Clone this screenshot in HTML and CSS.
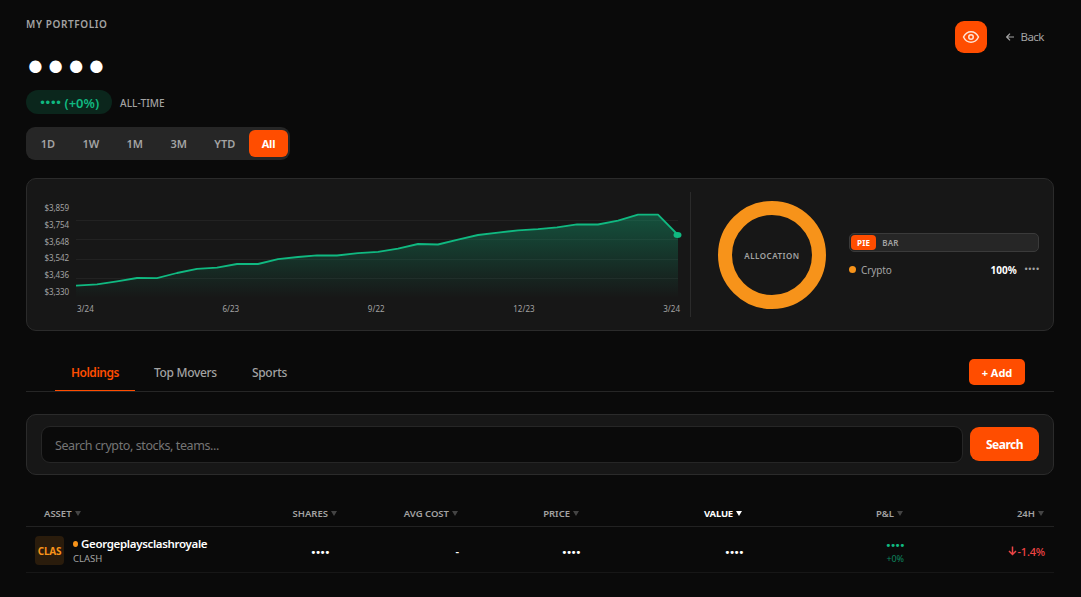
FILE: index.html
```
<!DOCTYPE html>
<html lang="en">
<head>
    <meta charset="UTF-8">
    <meta name="viewport" content="width=device-width, initial-scale=1.0">
    <title>My Portfolio</title>
    <link rel="stylesheet" href="styles.css">
</head>
<body>
    <header class="header">
        <div class="summary">
            <div class="title">MY PORTFOLIO</div>
            <div class="balance">••••</div>
            <div class="change-row">
                <span class="badge"><span class="badge-dots">••••</span><span>(+0%)</span></span>
                <span class="period">ALL-TIME</span>
            </div>
            <div class="ranges">
                <button>1D</button>
                <button>1W</button>
                <button>1M</button>
                <button>3M</button>
                <button>YTD</button>
                <button class="active">All</button>
            </div>
        </div>
        <div class="actions">
            <button class="eye-btn" aria-label="Show balances">
                <svg width="18" height="18" viewBox="0 0 24 24" fill="none" stroke="currentColor" stroke-width="2" stroke-linecap="round" stroke-linejoin="round">
                    <path d="M2 12s3.500-7 10-7 10 7 10 7-3.500 7-10 7-10-7-10-7z"/>
                    <circle cx="12" cy="12" r="3"/>
                </svg>
            </button>
            <a class="back" href="#">
                <svg width="8" height="8" viewBox="0 0 8 8" fill="none" stroke="currentColor" stroke-width="1.2"><path d="M8 4H0.800M4 0.600L0.700 4L4 7.400"/></svg>
                <span>Back</span>
            </a>
        </div>
    </header>

    <section class="card overview">
        <div class="chart">
            <div class="y-axis">
                <span>$3,859</span>
                <span>$3,754</span>
                <span>$3,648</span>
                <span>$3,542</span>
                <span>$3,436</span>
                <span>$3,330</span>
            </div>
            <div class="plot">
                <svg class="plot-svg" width="602" height="97" viewBox="0 0 602 97">
                    <defs>
                        <linearGradient id="fill" x1="0" y1="0" x2="0" y2="1">
                            <stop offset="0" stop-color="#10b981" stop-opacity="0.36"/>
                            <stop offset="1" stop-color="#10b981" stop-opacity="0"/>
                        </linearGradient>
                    </defs>
                    <path class="grid-line" d="M0 19.500H602M0 38.500H602M0 58.500H602M0 77.500H602"/>
                    <path fill="url(#fill)" d="M0 84.700L21 83.300L41 80.300L61 77L81 77.200L101 72L121 67.800L141 66.700L161 63L182 63L202 58.200L222 56L241 54.300L261 54.500L282 52.200L302 50.800L322 47.700L342 43L362 43.500L382 38.700L402 34L422 31.700L442 29.300L462 28.200L481 26.300L501 23.300L522 23.500L542 19.700L562 13.700L582 13.700L602 34V97H0Z"/>
                    <polyline class="line" points="0,84.700 21,83.300 41,80.300 61,77 81,77.200 101,72 121,67.800 141,66.700 161,63 182,63 202,58.200 222,56 241,54.300 261,54.500 282,52.200 302,50.800 322,47.700 342,43 362,43.500 382,38.700 402,34 422,31.700 442,29.300 462,28.200 481,26.300 501,23.300 522,23.500 542,19.700 562,13.700 582,13.700 602,34"/>
                    <ellipse cx="601.500" cy="34" rx="4" ry="3" fill="#10b981"/>
                </svg>
                <div class="x-axis">
                    <span>3/24</span>
                    <span>6/23</span>
                    <span>9/22</span>
                    <span>12/23</span>
                    <span>3/24</span>
                </div>
            </div>
        </div>
        <div class="allocation">
            <div class="donut"><span>ALLOCATION</span></div>
            <div class="legend">
                <div class="toggle">
                    <button class="active">PIE</button>
                    <button>BAR</button>
                </div>
                <div class="legend-row">
                    <i class="legend-dot"></i>
                    <span class="legend-name">Crypto</span>
                    <b>100%</b>
                    <span class="legend-value">••••</span>
                </div>
            </div>
        </div>
    </section>

    <nav class="tabs">
        <a class="tab active" href="#">Holdings</a>
        <a class="tab" href="#">Top Movers</a>
        <a class="tab" href="#">Sports</a>
        <button class="add-btn">+ Add</button>
    </nav>

    <form class="card search">
        <input type="text" placeholder="Search crypto, stocks, teams...">
        <button type="button">Search</button>
    </form>

    <table class="holdings">
        <colgroup>
            <col class="c-asset"><col class="c-shares"><col class="c-cost"><col class="c-price"><col class="c-value"><col class="c-pl"><col class="c-day">
        </colgroup>
        <thead>
            <tr>
                <th class="left">ASSET<i></i></th>
                <th>SHARES<i></i></th>
                <th>AVG COST<i></i></th>
                <th>PRICE<i></i></th>
                <th class="sorted">VALUE<i></i></th>
                <th>P&amp;L<i></i></th>
                <th>24H<i></i></th>
            </tr>
        </thead>
        <tbody>
            <tr>
                <td class="left">
                    <div class="asset">
                        <div class="avatar">CLAS</div>
                        <div class="asset-text">
                            <div class="asset-name"><i></i>Georgeplaysclashroyale</div>
                            <div class="asset-symbol">CLASH</div>
                        </div>
                    </div>
                </td>
                <td class="shares"><span class="dots">••••</span></td>
                <td>-</td>
                <td><span class="dots">••••</span></td>
                <td><span class="dots">••••</span></td>
                <td class="pl"><span class="dots">••••</span><small>+0%</small></td>
                <td class="day">
                    <svg width="9" height="10" viewBox="0 0 9 10" fill="none" stroke="currentColor" stroke-width="1.500"><path d="M4.500 0.500V8.500M1 5L4.500 8.500L8 5"/></svg><span>-1.4%</span>
                </td>
            </tr>
        </tbody>
    </table>
</body>
</html>
```
FILE: styles.css
```
* {
    margin: 0;
    padding: 0;
    box-sizing: border-box;
}

body {
    background: #0a0a0a;
    color: #fff;
    font-family: 'Noto Sans', 'Segoe UI', sans-serif;
    font-size: 11px;
    padding: 17px 27px 0 26px;
    height: 597px;
    overflow: hidden;
}

button {
    border: none;
    background: none;
    font-family: inherit;
    cursor: pointer;
    white-space: nowrap;
}

a {
    text-decoration: none;
}

.header {
    display: flex;
    justify-content: space-between;
}

.title {
    padding-bottom: 1px;
    font-size: 10px;
    font-weight: 600;
    letter-spacing: 0.6px;
    line-height: 14px;
    color: #a3a3a3;
}

.balance {
    height: 40px;
    margin: 16px 0 2px -3px;
    font-family: 'DejaVu Sans', sans-serif;
    font-size: 42px;
    line-height: 42px;
    letter-spacing: -4.400px;
}

.change-row {
    display: flex;
    align-items: center;
    gap: 8px;
}

.badge {
    display: flex;
    align-items: center;
    justify-content: center;
    gap: 4px;
    width: 86px;
    height: 24px;
    padding-top: 1px;
    border-radius: 12px;
    background: #0b261c;
    color: #10b981;
    font-size: 13px;
    font-weight: 600;
    line-height: 18px;
    white-space: nowrap;
}

.badge-dots {
    padding-top: 1px;
    font-family: 'DejaVu Sans', sans-serif;
    font-size: 12px;
    font-weight: 400;
    letter-spacing: -1.700px;
}

.period {
    color: #a3a3a3;
    font-size: 10px;
    font-weight: 500;
    padding-top: 2px;
    letter-spacing: 0.1px;
}

.ranges {
    display: flex;
    width: 264px;
    height: 33px;
    margin-top: 13px;
    padding: 3px 2px 3px 1px;
    border-radius: 9px;
    background: #262626;
}

.ranges button {
    flex: 1 1 auto;
    padding: 0 11px;
    border-radius: 6px;
    color: #a3a3a3;
    font-size: 11px;
    font-weight: 600;
}

.ranges .active {
    flex: none;
    width: 39px;
    background: #ff4d00;
    color: #fff;
    font-weight: 700;
    letter-spacing: -0.2px;
}

.actions {
    display: flex;
    align-items: center;
    gap: 19px;
    height: 32px;
    margin-top: 4px;
    padding-right: 10px;
}

.eye-btn {
    display: flex;
    align-items: center;
    justify-content: center;
    width: 32px;
    height: 32px;
    border-radius: 9px;
    background: #ff4d00;
    color: #ffe4d6;
}

.back {
    display: flex;
    align-items: center;
    gap: 6px;
    padding-bottom: 1px;
    color: #a3a3a3;
    font-size: 11.500px;
    letter-spacing: -0.5px;
}

.card {
    border: 1px solid #2b2b2b;
    border-radius: 10px;
    background: #171717;
}

.overview {
    display: flex;
    height: 153px;
    margin-top: 18px;
    padding: 13px 14px;
}

.chart {
    display: flex;
    width: 650px;
    padding-left: 2px;
    border-right: 1px solid #2b2b2b;
}

.y-axis {
    display: flex;
    flex-direction: column;
    justify-content: space-between;
    width: 26px;
    height: 94px;
    margin-top: 11px;
    color: #a3a3a3;
    font-size: 8px;
    line-height: 10px;
    letter-spacing: -0.1px;
    text-align: right;
}

.plot {
    width: 602px;
    margin-left: 7px;
    padding-top: 9px;
}

.plot-svg {
    display: block;
    overflow: visible;
}

.grid-line {
    stroke: #222;
    stroke-width: 1;
}

.line {
    fill: none;
    stroke: #10b981;
    stroke-width: 1.800;
    stroke-linejoin: round;
}

.x-axis {
    display: flex;
    justify-content: space-between;
    margin: 6px -2px 0 1px;
    color: #a3a3a3;
    font-size: 8px;
    line-height: 10px;
}

.allocation {
    display: flex;
    align-items: center;
    flex: 1;
    padding-left: 27px;
}

.donut {
    display: flex;
    align-items: center;
    justify-content: center;
    width: 108px;
    height: 108px;
    border: 14px solid #f7931a;
    border-radius: 50%;
    color: #a3a3a3;
    font-size: 8px;
    font-weight: 600;
    letter-spacing: 0.5px;
}

.donut span {
    padding-top: 2px;
}

.legend {
    flex: 1;
    margin-left: 23px;
    padding-top: 1px;
}

.toggle {
    display: flex;
    height: 19px;
    padding: 1px;
    border: 1px solid #3a3a3a;
    border-radius: 5px;
    background: #262626;
}

.toggle button {
    height: 15px;
    padding: 0 6px;
    border-radius: 4px;
    color: #a3a3a3;
    font-size: 8px;
    font-weight: 600;
    line-height: 15px;
    letter-spacing: 0.2px;
}

.toggle .active {
    background: #ff4d00;
    color: #fff;
    font-weight: 700;
}

.legend-row {
    display: flex;
    align-items: center;
    margin-top: 10px;
    line-height: 16px;
    font-size: 10px;
}

.legend-dot {
    width: 7px;
    height: 7px;
    border-radius: 50%;
    background: #f7931a;
}

.legend-name {
    flex: 1;
    margin-left: 5px;
    color: #a3a3a3;
    letter-spacing: -0.1px;
}

.legend-value {
    margin-left: 7px;
    color: #a3a3a3;
    font-family: 'DejaVu Sans', sans-serif;
    font-size: 8px;
    letter-spacing: -0.900px;
}

.tabs {
    display: flex;
    height: 37px;
    margin-top: 24px;
    padding: 0 29px;
    border-bottom: 1px solid #262626;
}

.tab {
    height: 36px;
    margin-right: 3px;
    padding: 0 16px;
    color: #a3a3a3;
    font-size: 12px;
    font-weight: 500;
    line-height: 36px;
    letter-spacing: -0.3px;
    white-space: nowrap;
}

.tab.active {
    border-bottom: 1px solid #ff4d00;
    color: #ff4d00;
    font-weight: 600;
    letter-spacing: -0.5px;
}

.add-btn {
    width: 56px;
    height: 26px;
    margin: 4px 0 0 auto;
    padding-top: 1px;
    border-radius: 5px;
    background: #ff4d00;
    color: #fff;
    font-size: 11px;
    font-weight: 700;
}

.search {
    display: flex;
    align-items: center;
    gap: 7px;
    height: 61px;
    margin-top: 22px;
    padding: 0 14px;
}

.search input {
    flex: 1;
    height: 37px;
    padding: 2px 13px 0;
    border: 1px solid #262626;
    border-radius: 9px;
    background: #0a0a0a;
    color: #fff;
    font-family: inherit;
    font-size: 12.500px;
    letter-spacing: -0.4px;
}

.search input::placeholder {
    color: #757575;
}

.search button {
    width: 69px;
    height: 34px;
    margin-bottom: 1px;
    border-radius: 9px;
    background: #ff4d00;
    color: #fff;
    font-size: 12px;
    font-weight: 700;
    letter-spacing: -0.5px;
}

.holdings {
    width: 1028px;
    margin-top: 25px;
    border-collapse: collapse;
    table-layout: fixed;
}

.c-asset { width: 200px; }
.c-shares { width: 121px; }
.c-cost { width: 121px; }
.c-price { width: 121px; }
.c-value { width: 163px; }
.c-pl { width: 161px; }
.c-day { width: 141px; }

.holdings th {
    height: 26px;
    padding: 1px 10px 0 0;
    border-bottom: 1px solid #222;
    color: #a3a3a3;
    font-size: 9.500px;
    font-weight: 600;
    text-align: right;
    white-space: nowrap;
}

.holdings th.left {
    padding-left: 18px;
    text-align: left;
}

.holdings th i {
    display: inline-block;
    margin-left: 3px;
    border: 3px solid transparent;
    border-top: 5px solid #444;
    border-bottom: 0;
    vertical-align: 1px;
}

.holdings .sorted {
    color: #fff;
    font-weight: 700;
    letter-spacing: -0.2px;
}

.holdings .sorted i {
    border-top-color: #fff;
}

.holdings td {
    height: 46px;
    padding: 5px 9px 0 0;
    border-bottom: 1px solid #171717;
    font-weight: 600;
    text-align: right;
}

.holdings td.left {
    padding: 2px 0 0 9px;
    text-align: left;
}

.holdings td.shares {
    padding-right: 18px;
}

.dots {
    font-family: 'DejaVu Sans', sans-serif;
    font-size: 10.500px;
    font-weight: 400;
    letter-spacing: -1.500px;
}

.asset {
    display: flex;
    align-items: center;
    gap: 9px;
}

.asset-text {
    padding-top: 1px;
}

.avatar {
    width: 29px;
    height: 29px;
    border-radius: 4px;
    background: #2a1c0c;
    color: #f7931a;
    font-size: 10px;
    font-weight: 700;
    line-height: 31px;
    letter-spacing: -0.2px;
    text-align: center;
}

.asset-name {
    display: flex;
    align-items: center;
    font-size: 11.500px;
    line-height: 16px;
    letter-spacing: -0.33px;
}

.asset-name i {
    width: 5px;
    height: 6px;
    margin-right: 3px;
    border-radius: 50%;
    background: #f7931a;
}

.asset-symbol {
    color: #a3a3a3;
    font-size: 9.500px;
    font-weight: 400;
    line-height: 13px;
}

.holdings .pl {
    color: #10b981;
    line-height: 13px;
}

.pl small {
    display: block;
    opacity: 0.7;
    font-size: 9px;
    font-weight: 400;
    letter-spacing: -0.1px;
}

.holdings .day {
    color: #ef4444;
    font-weight: 500;
    letter-spacing: -0.2px;
    white-space: nowrap;
}

.day svg {
    margin-right: 1px;
}
```
